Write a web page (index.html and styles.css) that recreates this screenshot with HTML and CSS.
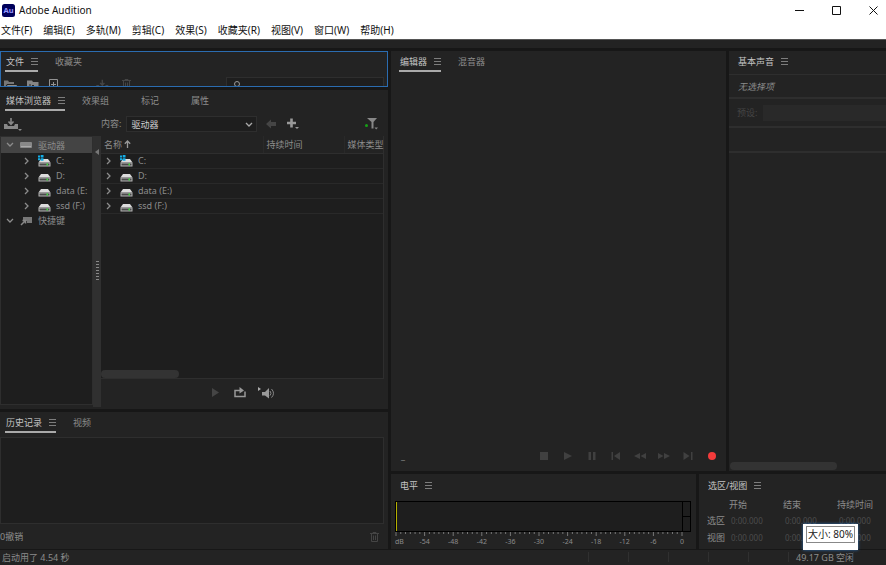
FILE: index.html
```html
<!DOCTYPE html>
<html lang="zh-CN">
<head>
<meta charset="utf-8">
<title>Adobe Audition</title>
<link rel="stylesheet" href="styles.css">
</head>
<body>
<svg class="defs" aria-hidden="true">
  <symbol id="menu" viewBox="0 0 7 7"><path d="M0 .5h7M0 3.5h7M0 6.5h7" stroke="currentColor" fill="none"/></symbol>
  <symbol id="right" viewBox="0 0 6 8"><path d="M1 1l3 3-3 3" stroke="currentColor" stroke-width="1.3" fill="none"/></symbol>
  <symbol id="down" viewBox="0 0 8 6"><path d="M1 1l3 3 3-3" stroke="currentColor" stroke-width="1.3" fill="none"/></symbol>
  <symbol id="drive" viewBox="0 0 13 12"><path d="M3 4h7l2.500 3.500H.5z" fill="#dcdcdc"/><path d="M.5 7.500h12v4h-12z" fill="#b4b4b4"/><path d="M1.500 8.500h10v2h-10z" fill="#4a4a4a"/><path d="M8.500 8.500H10v2H8.500z" fill="#3fdc3f"/></symbol>
  <symbol id="sysdrive" viewBox="0 0 13 12"><path d="M3 4h7l2.500 3.500H.5z" fill="#dcdcdc"/><path d="M.5 7.500h12v4h-12z" fill="#b4b4b4"/><path d="M1.500 8.500h10v2h-10z" fill="#4a4a4a"/><path d="M8.500 8.500H10v2H8.500z" fill="#3fdc3f"/><path d="M0 .5h2v2H0zM2.700 0h2.800v2.500H2.700zM0 3.200h2v2H0zM2.700 3.200h2.800v2.500H2.700z" fill="#12aee8"/></symbol>
  <symbol id="import" viewBox="0 0 18 14"><path d="M0 7h3l1 2h6l1-2h3v5H0z" fill="currentColor"/><path d="M7 1v5M4.500 4.500L7 7.300l2.500-2.800" stroke="currentColor" stroke-width="1.600" fill="none"/><path d="M14 12h4l-2 2z" fill="currentColor"/></symbol>
  <symbol id="trash" viewBox="0 0 9 10"><path d="M0 1.500h9M3 1.500v-1h3v1M1.500 2v7.500h6V2M3.500 3.500v4.500M5.500 3.500v4.500" stroke="currentColor" fill="none"/></symbol>
</svg>

<header class="titlebar">
  <svg class="logo" viewBox="0 0 13 13" aria-hidden="true"><rect width="13" height="13" rx="2.500" fill="#00005b"/><text x="6.500" y="9.300" text-anchor="middle" font-size="7.500" font-weight="700" fill="#9999ff">Au</text></svg>
  <h1>Adobe Audition</h1>
  <div class="window-buttons">
    <button aria-label="最小化"><svg viewBox="0 0 9 9"><path d="M0 4.500h9"/></svg></button>
    <button aria-label="最大化"><svg viewBox="0 0 9 9"><path d="M.5.5h8v8h-8z"/></svg></button>
    <button aria-label="关闭"><svg viewBox="0 0 9 9"><path d="M.5.5l8 8M8.500.5l-8 8"/></svg></button>
  </div>
</header>
<nav class="menubar">
  <button>文件(F)</button><button>编辑(E)</button><button>多轨(M)</button><button>剪辑(C)</button><button>效果(S)</button><button>收藏夹(R)</button><button>视图(V)</button><button>窗口(W)</button><button>帮助(H)</button>
</nav>
<div class="toolstrip"></div>

<main class="workspace">
  <div class="column left">
    <section class="panel files">
      <div class="tabs">
        <button class="tab active">文件<svg class="menu-icon"><use href="#menu"/></svg></button>
        <button class="tab">收藏夹</button>
      </div>
      <div class="file-tools">
        <button aria-label="打开文件"><svg width="13" height="11" viewBox="0 0 13 11"><path d="M0 10V1.500h4l1 1.500h5v2H3z" fill="#777"/><path d="M3.500 6H13l-2 4.500H1z" fill="#8d8d8d"/></svg></button>
        <button aria-label="导入文件夹"><svg width="12" height="11" viewBox="0 0 12 11"><path d="M0 10V1.500h5L6 3h5.500v7z" fill="#858585"/><path d="M3 5v4M5 6.500h2" stroke="#232323"/></svg></button>
        <button aria-label="新建文件"><svg width="10" height="10" viewBox="0 0 10 10"><path d="M.5.5h8v9h-8zM4.500 3v5M2 5.500h5" stroke="#929292" fill="none"/></svg></button>
        <button class="dim gap" aria-label="插入到多轨"><svg width="16" height="12"><use href="#import"/></svg></button>
        <button class="dim" aria-label="删除文件"><svg width="9" height="10"><use href="#trash"/></svg></button>
        <label class="search"><svg width="12" height="10" viewBox="0 0 12 10"><circle cx="4" cy="4" r="2.500" stroke="#999" fill="none"/><path d="M2.500 6L.5 9M7 6.500h4" stroke="#999"/></svg><input type="search" aria-label="搜索文件"></label>
      </div>
    </section>

    <section class="panel media">
      <div class="tabs">
        <button class="tab active">媒体浏览器<svg class="menu-icon"><use href="#menu"/></svg></button>
        <button class="tab">效果组</button><button class="tab">标记</button><button class="tab">属性</button>
      </div>
      <div class="media-tools">
        <button class="import" aria-label="导入"><svg width="18" height="14"><use href="#import"/></svg></button>
        <label for="content">内容:</label>
        <span class="select"><select id="content"><option>驱动器</option></select><svg width="8" height="6"><use href="#down"/></svg></span>
        <button class="dim" aria-label="后退"><svg width="11" height="10" viewBox="0 0 11 10"><path d="M0 5l5-4.500V3h5v4H5v2.500z" fill="currentColor"/></svg></button>
        <button class="add" aria-label="添加"><svg width="12" height="12" viewBox="0 0 12 12"><path d="M0 5h9M4.500.5v9" stroke="#999" stroke-width="2.600"/><path d="M8 9h4l-2 2z" fill="#999"/></svg></button>
        <button class="filter" aria-label="筛选"><svg width="13" height="12" viewBox="0 0 13 12"><path d="M2 0h10L8.500 4v6.500h-2V4z" fill="#888"/><path d="M9.500 9.500H13L11.200 11.500z" fill="#888"/><circle cx="1.500" cy="7.500" r="1.500" fill="#16a016"/></svg></button>
      </div>
      <div class="browser">
        <ul class="tree">
          <li class="selected"><svg width="8" height="6"><use href="#down"/></svg><svg class="root" viewBox="0 0 13 12"><rect y="3" width="12" height="6" rx="1" fill="#888"/><path d="M1 7.500h10" stroke="#aaa"/></svg>驱动器</li>
          <li class="child"><svg width="6" height="8"><use href="#right"/></svg><svg class="disk"><use href="#sysdrive"/></svg>C:</li>
          <li class="child"><svg width="6" height="8"><use href="#right"/></svg><svg class="disk"><use href="#drive"/></svg>D:</li>
          <li class="child"><svg width="6" height="8"><use href="#right"/></svg><svg class="disk"><use href="#drive"/></svg>data (E:</li>
          <li class="child"><svg width="6" height="8"><use href="#right"/></svg><svg class="disk"><use href="#drive"/></svg>ssd (F:)</li>
          <li><svg width="8" height="6"><use href="#down"/></svg><svg class="root" viewBox="0 0 13 12"><path d="M3 2h9v6H7V6H3z" fill="#777"/><path d="M1 10l4-4M2.500 5.500H5.500v3" stroke="#888" stroke-width="1.500" fill="none"/></svg>快捷键</li>
        </ul>
        <div class="splitter"><svg width="4" height="6" viewBox="0 0 4 6"><path d="M4 0v6L0 3z" fill="#777"/></svg><span class="grip"></span></div>
        <div class="listing">
          <div class="list-view">
            <table>
              <colgroup><col class="c-name"><col class="c-time"><col class="c-type"></colgroup>
              <thead><tr><th>名称<svg width="7" height="8" viewBox="0 0 7 8"><path d="M3.500 8V1M.8 3.700L3.500 1l2.700 2.700" stroke="#999" stroke-width="1.300" fill="none"/></svg></th><th>持续时间</th><th>媒体类型</th></tr></thead>
              <tbody>
                <tr><td><span><svg width="6" height="8"><use href="#right"/></svg><svg class="disk"><use href="#sysdrive"/></svg>C:</span></td><td></td><td></td></tr>
                <tr><td><span><svg width="6" height="8"><use href="#right"/></svg><svg class="disk"><use href="#drive"/></svg>D:</span></td><td></td><td></td></tr>
                <tr><td><span><svg width="6" height="8"><use href="#right"/></svg><svg class="disk"><use href="#drive"/></svg>data (E:)</span></td><td></td><td></td></tr>
                <tr><td><span><svg width="6" height="8"><use href="#right"/></svg><svg class="disk"><use href="#drive"/></svg>ssd (F:)</span></td><td></td><td></td></tr>
              </tbody>
            </table>
            <div class="thumb"></div>
          </div>
          <div class="preview">
            <button class="dim" aria-label="播放"><svg width="9" height="9" viewBox="0 0 9 9"><path d="M1 0l7 4.500L1 9z" fill="currentColor"/></svg></button>
            <button aria-label="循环播放"><svg width="12" height="11" viewBox="0 0 12 11"><path d="M3 3.500H1v6h10v-5" stroke="#999" stroke-width="1.500" fill="none"/><path d="M3 3.500h3" stroke="#999" stroke-width="1.500"/><path d="M5.500 0l4.500 3.500L5.500 6.500z" fill="#999"/></svg></button>
            <button aria-label="自动播放"><svg width="17" height="12" viewBox="0 0 17 12"><path d="M0 0l3 2-3 2z" fill="#aaa"/><path d="M4 5h3l4-4v10.500L7 8.500H4z" fill="#999"/><path d="M12 4q2 2.300 0 4.600M13.500 2q4 4.300 0 8.600" stroke="#888" fill="none"/></svg></button>
          </div>
        </div>
      </div>
    </section>

    <section class="panel history">
      <div class="tabs">
        <button class="tab active">历史记录<svg class="menu-icon"><use href="#menu"/></svg></button>
        <button class="tab">视频</button>
      </div>
      <div class="history-list"></div>
      <div class="history-foot"><span>0撤销</span><button class="dim" aria-label="删除"><svg width="9" height="10"><use href="#trash"/></svg></button></div>
    </section>
  </div>

  <div class="column right">
    <div class="row upper">
      <section class="panel wide editor">
        <div class="tabs">
          <button class="tab active">编辑器<svg class="menu-icon"><use href="#menu"/></svg></button>
          <button class="tab">混音器</button>
        </div>
        <div class="transport">
          <span class="timecode">_</span>
          <button aria-label="停止"><svg viewBox="0 0 12 8"><path d="M2 0h8v8H2z"/></svg></button>
          <button aria-label="播放"><svg viewBox="0 0 12 8"><path d="M2 0l8 4-8 4z"/></svg></button>
          <button aria-label="暂停"><svg viewBox="0 0 12 8"><path d="M2.500 0h2.500v8H2.500zM7 0h2.500v8H7z"/></svg></button>
          <button aria-label="移到上一个"><svg viewBox="0 0 12 8"><path d="M1.500 0h1.500v8H1.500zM10 0v8L4 4z"/></svg></button>
          <button aria-label="快退"><svg viewBox="0 0 12 8"><path d="M6 1v6L0 4zM12 1v6L6.500 4z"/></svg></button>
          <button aria-label="快进"><svg viewBox="0 0 12 8"><path d="M0 1v6l5.500-3zM6 1v6l6-3z"/></svg></button>
          <button aria-label="移到下一个"><svg viewBox="0 0 12 8"><path d="M1.500 0v8l6-4zM9 0h1.500v8H9z"/></svg></button>
          <button class="record" aria-label="录制"><svg viewBox="0 0 12 8"><circle cx="6" cy="4" r="4"/></svg></button>
        </div>
      </section>
      <section class="panel wide sound">
        <div class="tabs"><button class="tab active plain">基本声音<svg class="menu-icon"><use href="#menu"/></svg></button></div>
        <p class="none">无选择项</p>
        <div class="preset"><label for="preset">预设:</label><input id="preset" disabled></div>
        <div class="empty-row"></div>
        <div class="thumb"></div>
      </section>
    </div>
    <div class="row lower">
      <section class="panel wide levels">
        <div class="tabs"><button class="tab active plain">电平<svg class="menu-icon"><use href="#menu"/></svg></button></div>
        <div class="meter"><div class="bars"></div><div class="clip"><i></i><i></i></div></div>
        <svg class="ticks" viewBox="0 0 60 4" preserveAspectRatio="none" aria-hidden="true">
          <defs><path id="seg" d="M0 0v4M1 0v2M2 0v2M3 0v2M4 0v2M5 0v2" vector-effect="non-scaling-stroke"/></defs>
          <use href="#seg"/><use href="#seg" x="6"/><use href="#seg" x="12"/><use href="#seg" x="18"/><use href="#seg" x="24"/><use href="#seg" x="30"/><use href="#seg" x="36"/><use href="#seg" x="42"/><use href="#seg" x="48"/><use href="#seg" x="54"/>
          <path d="M60 0v4" vector-effect="non-scaling-stroke"/>
        </svg>
        <div class="scale"><span class="unit">dB</span><span>-54</span><span>-48</span><span>-42</span><span>-36</span><span>-30</span><span>-24</span><span>-18</span><span>-12</span><span>-6</span><span>0</span></div>
      </section>
      <section class="panel wide selection">
        <div class="tabs"><button class="tab active plain">选区/视图<svg class="menu-icon"><use href="#menu"/></svg></button></div>
        <table>
          <thead><tr><td></td><th>开始</th><th>结束</th><th>持续时间</th></tr></thead>
          <tbody>
            <tr><th>选区</th><td><input aria-label="选区开始" value="0:00.000"></td><td><input aria-label="选区结束" value="0:00.000"></td><td><input aria-label="选区持续时间" value="0:00.000"></td></tr>
            <tr><th>视图</th><td><input aria-label="视图开始" value="0:00.000"></td><td><input aria-label="视图结束" value="0:00.000"></td><td><input aria-label="视图持续时间" value="0:00.000"></td></tr>
          </tbody>
        </table>
        <div class="tooltip" role="tooltip"><span>大小: 80%</span></div>
      </section>
    </div>
  </div>
</main>

<footer class="status">
  <span class="message">启动用了 4.54 秒</span>
  <i></i><i></i><i></i><i></i><i></i>
  <span class="space">49.17 GB 空闲</span>
  <span class="end"></span>
</footer>
</body>
</html>
```
FILE: styles.css
```css
:root {
  --panel: #232323;
  --well: #1e1e1e;
  --gap: #171717;
  --line: #2e2e2e;
  --text: #8c8c8c;
  --bright: #c4c4c4;
}

* { box-sizing: border-box; }

body {
  margin: 0;
  height: 100vh;
  display: flex;
  flex-direction: column;
  overflow: hidden;
  background: var(--gap);
  color: var(--text);
  font: 9px/15px "Noto Sans", "Noto Sans CJK SC", sans-serif;
}

button, input, select {
  margin: 0;
  padding: 0;
  border: 0;
  background: none;
  color: inherit;
  font: inherit;
}

input, select { min-width: 0; }
svg { display: block; flex: none; }
.defs { position: absolute; width: 0; height: 0; }

/* window frame */
.titlebar {
  display: flex;
  align-items: center;
  height: 21px;
  padding-left: 2px;
  background: #fff;
  color: #111;
}
.logo { width: 13px; height: 13px; margin-right: 4px; }
.titlebar h1 { margin: 0; font-size: 10px; font-weight: 400; }
.window-buttons { display: flex; margin-left: auto; }
.window-buttons button { display: grid; place-items: center; width: 37px; height: 21px; }
.window-buttons button:last-child { width: 25px; margin-left: 6px; }
.window-buttons svg { width: 9px; height: 9px; fill: none; stroke: #111; }

.menubar {
  display: flex;
  gap: 11px;
  height: 19px;
  padding-left: 1px;
  background: #fff;
  border-bottom: 1px solid #555;
  color: #111;
  font-size: 10px;
  line-height: 18px;
}
.menubar button { white-space: nowrap; }
.toolstrip { height: 8px; margin-bottom: 3px; background: var(--panel); }

/* panel grid */
.workspace {
  flex: 1;
  min-height: 0;
  display: grid;
  grid-template-columns: 388fr 495fr;
  gap: 3px;
}
.column { display: flex; flex-direction: column; gap: 3px; min-width: 0; min-height: 0; }
.row { display: grid; gap: 3px; }
.upper { flex: 1; min-height: 0; grid-template-columns: 335fr 157fr; }
.lower { grid-template-columns: 305fr 187fr; height: 75px; }
.panel { display: flex; flex-direction: column; min-width: 0; background: var(--panel); }

.tabs { display: flex; gap: 17px; padding-left: 5px; }
.wide .tabs { padding-left: 8px; }
.tab {
  display: flex;
  align-items: center;
  height: 21px;
  padding: 2px 15px 0 0;
  border-bottom: 2px solid transparent;
  line-height: 17px;
  white-space: nowrap;
}
.tab.active { gap: 7px; padding: 2px 0 0 1px; border-color: #aaa; color: var(--bright); }
.tab.plain { border-color: transparent; }
.menu-icon { width: 7px; height: 7px; color: #7d7d7d; }
.dim { color: #454545; }
.thumb { height: 8px; border-radius: 4px; background: #333; }

/* files */
.files { height: 36px; overflow: hidden; outline: 1px solid #2b6cb0; outline-offset: -1px; }
.file-tools { display: flex; align-items: flex-start; gap: 10px; padding: 6px 4px 0 4px; }
.file-tools button { margin-top: 1px; }
.file-tools .gap { margin-left: 27px; }
.search {
  display: flex;
  width: 158px;
  height: 16px;
  margin: -1px 0 0 auto;
  padding: 2px 0 0 6px;
  background: var(--well);
  border: 1px solid var(--line);
}
.search input { flex: 1; appearance: none; }

/* media browser */
.media { flex: 318; min-height: 0; padding-bottom: 2px; }
.media-tools { display: flex; align-items: center; height: 25px; padding: 0 10px 0 4px; }
.import { margin-right: 79px; color: #888; }
.select { position: relative; width: 131px; margin: 0 9px 0 5px; }
.select select {
  width: 100%;
  height: 16px;
  padding-left: 4px;
  appearance: none;
  background: var(--well);
  border: 1px solid var(--line);
  color: #d0d0d0;
}
.select svg { position: absolute; right: 4px; top: 6px; color: #aaa; }
.add { margin-left: 10px; }
.filter { margin-left: auto; }

.browser { flex: 1; min-height: 0; display: grid; grid-template-columns: 93px 8px 1fr; }
.tree {
  margin: 0 0 2px;
  padding: 0;
  list-style: none;
  background: var(--well);
  border: 1px solid var(--line);
}
.tree li { display: flex; align-items: center; height: 15px; padding-left: 5px; white-space: nowrap; overflow: hidden; }
.tree .selected { height: 16px; background: #444; }
.tree .child { padding-left: 23px; }
.tree .child .disk { margin: 0 5px 0 8px; }
.root { width: 13px; height: 12px; margin: 0 5px 0 6px; }
.disk { width: 13px; height: 12px; }
.splitter { display: flex; flex-direction: column; align-items: center; padding-top: 13px; background: #303030; }
.grip {
  width: 3px;
  height: 20px;
  margin-top: 106px;
  background: repeating-linear-gradient(#888 0 1px, #303030 1px 3px);
}
.listing { display: flex; flex-direction: column; min-width: 0; padding-right: 4px; }
.list-view {
  flex: 1;
  display: flex;
  flex-direction: column;
  justify-content: space-between;
  background: var(--well);
  border: solid var(--line);
  border-width: 0 1px 1px 0;
}
.list-view .thumb { width: 78px; }
.listing table { width: 100%; border-collapse: collapse; table-layout: fixed; }
.c-name { width: 162px; }
.c-time { width: 81px; }
.listing th {
  height: 17px;
  padding: 0 0 0 3px;
  background: var(--panel);
  border-bottom: 1px solid var(--line);
  font-weight: 400;
  text-align: left;
  white-space: nowrap;
}
.listing th + th { border-left: 1px solid #292929; }
.listing th svg { display: inline; margin-left: 2px; }
.listing td { height: 15px; padding: 0; border-bottom: 1px solid #292929; }
.listing td span { display: flex; align-items: center; height: 14px; padding-left: 5px; }
.listing td .disk { margin: 0 5px 0 8px; }
.preview { display: flex; align-items: center; justify-content: center; gap: 12px; height: 28px; }
.preview button:first-child { margin-right: 2px; }

/* history */
.history { flex: 138; min-height: 0; }
.history-list { flex: 1; margin: 4px 4px 0 0; background: var(--well); border: 1px solid var(--line); }
.history-foot { display: flex; justify-content: space-between; align-items: center; height: 25px; padding-right: 9px; }

/* editor */
.transport { display: flex; align-items: center; gap: 12px; margin-top: auto; padding: 0 8px 8px 10px; }
.transport svg { width: 12px; height: 8px; fill: #404040; }
.timecode { margin-right: auto; }
.transport .record svg { fill: #f33b3b; }

/* essential sound */
.none { margin: 2px 0 0; padding: 4px 0 3px 9px; border-top: 1px solid var(--line); font-style: italic; }
.preset { display: flex; align-items: center; gap: 6px; height: 29px; padding-left: 8px; border-top: 2px solid var(--line); color: #454545; }
.preset input { flex: 1; height: 16px; background: #292929; }
.empty-row { height: 27px; border: solid var(--line); border-width: 2px 0; }
.sound .thumb { width: 68%; margin: auto 0 1px 1px; }

/* levels */
.levels .tabs, .selection .tabs { height: 23px; padding-top: 1px; }
.meter { display: flex; height: 31px; margin: 4px 5px 0 4px; border: 1px solid #000; }
.bars { flex: 1; background: var(--well); border-left: 1px solid #b5b000; }
.clip { display: grid; width: 8px; border-left: 1px solid #000; background: var(--well); }
.clip i + i { border-top: 1px solid #000; }
.ticks { width: calc(100% - 19px); height: 4px; margin-left: 5px; overflow: visible; stroke: #777; }
.scale { display: flex; justify-content: space-between; margin: 0 4px 0 -5px; font-size: 7px; line-height: 11px; }
.scale span { width: 20px; text-align: center; }
.scale .unit { padding-left: 7px; }

/* selection / view */
.selection { position: relative; }
.selection table { width: 100%; border-collapse: collapse; table-layout: fixed; }
.selection th, .selection td { height: 17px; padding: 0; font-weight: 400; text-align: left; line-height: 15px; white-space: nowrap; }
.selection thead th, .selection thead td { height: 15px; }
.selection tr > :first-child { width: 30px; padding-left: 8px; }
.selection tr > :last-child { width: 49px; }
.selection input { display: block; width: 100%; height: 14px; padding-left: 2px; color: #4c4c4c; font-size: 8px; }
.tooltip {
  position: absolute;
  right: 28px;
  bottom: -1px;
  height: 26px;
  padding: 2px 3px;
  background: #fff;
  box-shadow: 0 0 3px #2b6cb0;
  color: #222;
  font-size: 10px;
}
.tooltip span { display: block; padding: 0 1px; border: 1px solid #888; white-space: nowrap; }

/* status bar */
.status { display: flex; height: 15px; margin-top: 1px; padding-left: 2px; background: var(--panel); line-height: 16px; }
.message { flex: 1; }
.status i { width: 40px; }
.space { width: 65px; padding-left: 7px; white-space: nowrap; }
.end { width: 33px; }
.status i, .space, .end { margin-top: 2px; height: 10px; border-left: 1px solid #303030; line-height: 12px; }
```
